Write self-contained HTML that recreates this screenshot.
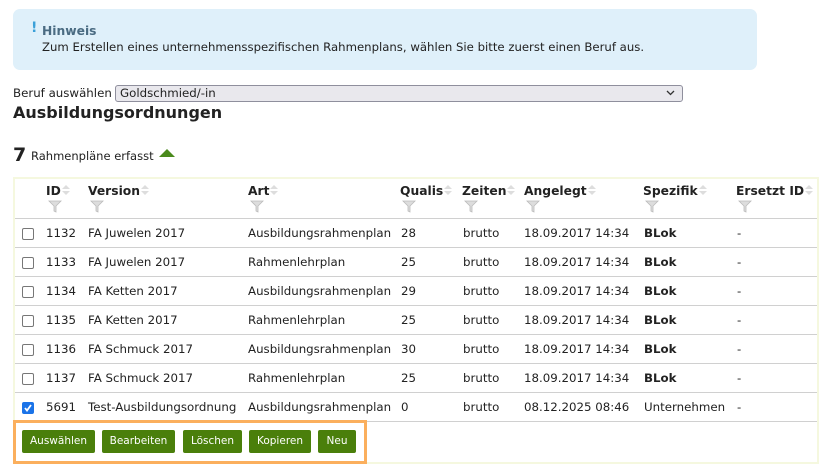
<!DOCTYPE html>
<html><head><meta charset="utf-8"><style>
*{box-sizing:border-box;margin:0;padding:0}
body{width:829px;height:471px;background:#fff;font-family:"DejaVu Sans","Liberation Sans",sans-serif;font-size:11.8px;color:#222;position:relative;overflow:hidden}
.a{position:absolute;white-space:nowrap}
.hint{left:13px;top:9px;width:744px;height:61px;background:#dff0fa;border-radius:7px}
.th{font-weight:bold;font-size:12.3px;color:#222}
.sort{display:inline-block;width:8px;height:12px;vertical-align:-1px;margin-left:1px}
.btn{position:absolute;top:430px;height:23px;background:#4a7f0b;color:#fff;font-size:10.5px;line-height:23px;text-align:center;border-radius:2px}
.cb{position:absolute;left:22px;width:12px;height:12px;border:1px solid #777;border-radius:2px;background:#fff}
.line{position:absolute;left:15px;width:802px;height:1px;background:#d0d0d0}
</style></head><body>
<div class="a hint"></div>
<div class="a" style="left:31px;top:20px;color:#3aa0d8;font-weight:bold;font-size:14px">!</div>
<div class="a" style="left:42px;top:24px;font-weight:bold;color:#4a6b82;font-size:12.3px">Hinweis</div>
<div class="a" style="left:42px;top:40px;font-size:11.7px">Zum Erstellen eines unternehmensspezifischen Rahmenplans, wählen Sie bitte zuerst einen Beruf aus.</div>
<div class="a" style="left:13px;top:86px;font-size:11.8px">Beruf auswählen</div>
<div class="a" style="left:115px;top:85px;width:568px;height:17px;background:#e9e8ed;border:1px solid #8f8f9d;border-radius:3px;padding-left:4px;font-size:11.8px;line-height:15px">Goldschmied/-in
<svg style="position:absolute;right:7px;top:4px" width="9" height="6"><path d="M1 1l3.5 3.5L8 1" fill="none" stroke="#333" stroke-width="1.3"/></svg></div>
<div class="a" style="left:13px;top:103px;font-weight:bold;font-size:16px">Ausbildungsordnungen</div>
<div class="a" style="left:13px;top:144px;font-weight:bold;font-size:19px">7</div>
<div class="a" style="left:31px;top:149px;font-size:11.5px">Rahmenpläne erfasst</div>
<svg class="a" style="left:159px;top:148px" width="16" height="10"><path d="M0 9L8 1 16 9Z" fill="#4a8a1c"/></svg>
<div class="a" style="left:13px;top:177px;width:806px;height:287px;border:2px solid #f5f8df"></div>
<div class="line" style="top:218px"></div>
<div id="hdr"></div>
<div id="rows"></div>
<div class="a" style="left:13px;top:420px;width:354px;height:44px;border:3px solid #fbaf5d"></div>
<div class="btn" style="left:22px;width:73px">Auswählen</div>
<div class="btn" style="left:102px;width:73px">Bearbeiten</div>
<div class="btn" style="left:183px;width:59px">Löschen</div>
<div class="btn" style="left:249px;width:62px">Kopieren</div>
<div class="btn" style="left:318px;width:38px">Neu</div>
<script>
var cols=[[46,'ID'],[88,'Version'],[248,'Art'],[400,'Qualis'],[462,'Zeiten'],[524,'Angelegt'],[643,'Spezifik'],[736,'Ersetzt ID']];
var h='';
cols.forEach(function(c){
h+='<div class="a th" style="left:'+c[0]+'px;top:184px">'+c[1]+'<svg class="sort" viewBox="0 0 8 12"><path d="M0 5L4 1 8 5Z M0 7L4 11 8 7Z" fill="#ddd"/></svg></div>';
h+='<svg class="a" style="left:'+(c[0]+2)+'px;top:200px" width="14" height="13"><path d="M1 1H13L8 6V12L6 11V6Z" fill="#ddd" stroke="#bbb" stroke-width=".8"/></svg>';
});
document.getElementById('hdr').innerHTML=h;
var d=[['1132','FA Juwelen 2017','Ausbildungsrahmenplan','28','18.09.2017 14:34','BLok'],
['1133','FA Juwelen 2017','Rahmenlehrplan','25','18.09.2017 14:34','BLok'],
['1134','FA Ketten 2017','Ausbildungsrahmenplan','29','18.09.2017 14:34','BLok'],
['1135','FA Ketten 2017','Rahmenlehrplan','25','18.09.2017 14:34','BLok'],
['1136','FA Schmuck 2017','Ausbildungsrahmenplan','30','18.09.2017 14:34','BLok'],
['1137','FA Schmuck 2017','Rahmenlehrplan','25','18.09.2017 14:34','BLok'],
['5691','Test-Ausbildungsordnung','Ausbildungsrahmenplan','0','08.12.2025 08:46','Unternehmen']];
var r='';
d.forEach(function(x,i){var y=219+i*29;var t=y+7;
if(i==6) r+='<div class="cb" style="top:'+(y+9)+'px;background:#1a73e8;border-color:#1a73e8"><svg width="10" height="10" style="position:absolute;left:0;top:0"><path d="M2 5l2 2.5L8 2" fill="none" stroke="#fff" stroke-width="1.8"/></svg></div>';
else r+='<div class="cb" style="top:'+(y+9)+'px"></div>';
r+='<div class="a" style="left:46px;top:'+t+'px">'+x[0]+'</div><div class="a" style="left:88px;top:'+t+'px">'+x[1]+'</div><div class="a" style="left:248px;top:'+t+'px">'+x[2]+'</div><div class="a" style="left:401px;top:'+t+'px">'+x[3]+'</div><div class="a" style="left:463px;top:'+t+'px">brutto</div><div class="a" style="left:524px;top:'+t+'px">'+x[4]+'</div><div class="a" style="left:644px;top:'+t+'px;'+(x[5]=='BLok'?'font-weight:bold':'')+'">'+x[5]+'</div><div class="a" style="left:737px;top:'+t+'px">-</div>';
r+='<div class="line" style="top:'+(y+28)+'px"></div>';
});
document.getElementById('rows').innerHTML=r;
</script>
</body></html>
